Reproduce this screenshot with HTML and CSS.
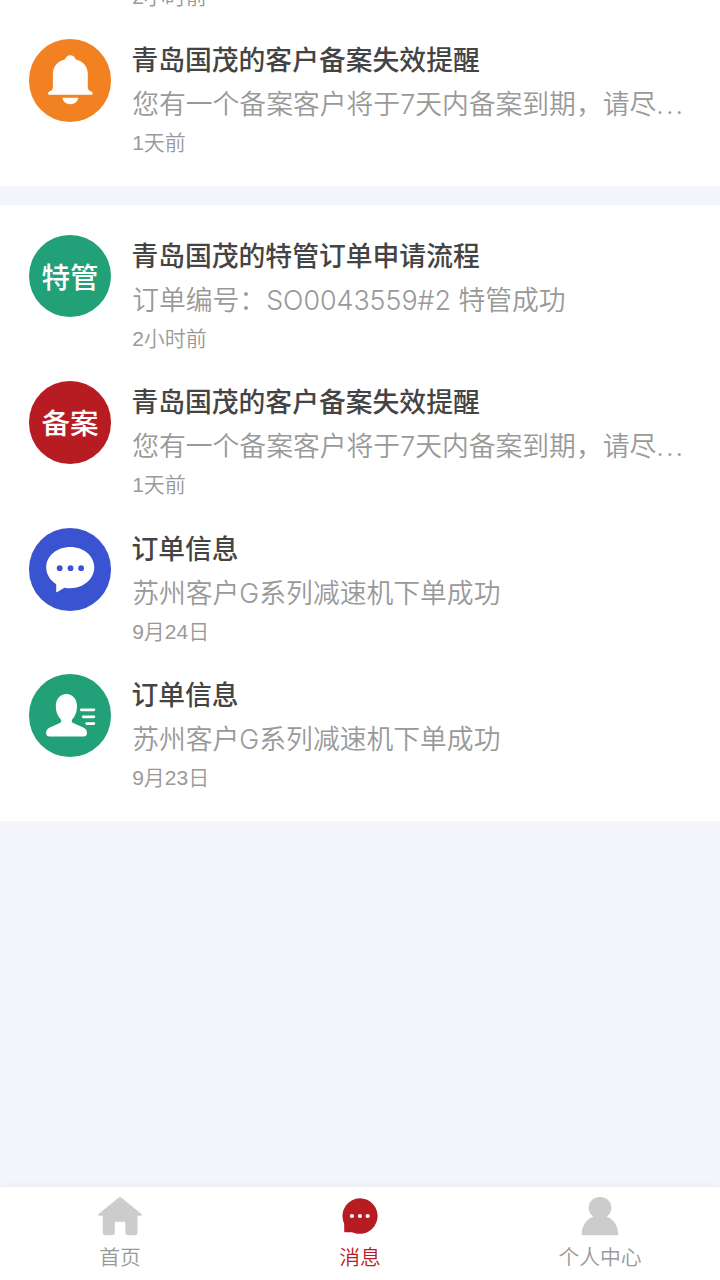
FILE: index.html
```html
<!DOCTYPE html>
<html lang="zh">
<head>
    <meta charset="UTF-8">
    <meta name="viewport" content="width=device-width, initial-scale=1.0">
    <title>消息</title>
    <link rel="stylesheet" href="styles.css">
</head>
<body>
    <div class="page">
        <div class="section section-top">
            <div class="item">
                <div class="content">
                    <p class="time">2小时前</p>
                </div>
            </div>
            <div class="item">
                <div class="avatar orange">
                    <svg viewBox="0 0 83 83">
                        <path d="M41.500 16.200c2.700 0 4.700 1.700 5.200 4.200 7.500 2 12.300 7.200 12.300 14.600v12.500c0 3 .8 4 3 4.900 2.600.8 2.600 3.600 0 3.600H21c-2.600 0-2.600-2.800 0-3.600 2.200-.9 3-1.900 3-4.900V35c0-7.400 4.800-12.600 12.300-14.600.5-2.500 2.500-4.200 5.200-4.200z"/>
                        <path d="M33.500 59h16c-.6 4-4 6.500-8 6.500s-7.400-2.500-8-6.500z"/>
                    </svg>
                </div>
                <div class="content">
                    <p class="title">青岛国茂的客户备案失效提醒</p>
                    <p class="desc">您有一个备案客户将于7天内备案到期，请尽<span class="more">...</span></p>
                    <p class="time">1天前</p>
                </div>
            </div>
        </div>

        <div class="section">
            <div class="item">
                <div class="avatar green">特管</div>
                <div class="content">
                    <p class="title">青岛国茂的特管订单申请流程</p>
                    <p class="desc">订单编号：SO0043559#2 特管成功</p>
                    <p class="time">2小时前</p>
                </div>
            </div>
            <div class="item">
                <div class="avatar red">备案</div>
                <div class="content">
                    <p class="title">青岛国茂的客户备案失效提醒</p>
                    <p class="desc">您有一个备案客户将于7天内备案到期，请尽<span class="more">...</span></p>
                    <p class="time">1天前</p>
                </div>
            </div>
            <div class="item">
                <div class="avatar blue">
                    <svg viewBox="0 0 83 83">
                        <path d="M41.500 19C55 19 65.500 28 65.500 39.500S55 60.500 41.500 60.500c-2 0-4-.2-6-.6l-7 4.400c-.7.4-1.200.1-1.200-.7v-7.100C21 52.500 17.300 46.500 17.300 39.500 17.300 28 28 19 41.500 19z"/>
                        <g class="dots-blue">
                            <circle cx="30.800" cy="40.300" r="2.900"/>
                            <circle cx="41.700" cy="40.300" r="2.900"/>
                            <circle cx="52.300" cy="40.300" r="2.900"/>
                        </g>
                    </svg>
                </div>
                <div class="content">
                    <p class="title">订单信息</p>
                    <p class="desc">苏州客户G系列减速机下单成功</p>
                    <p class="time">9月24日</p>
                </div>
            </div>
            <div class="item">
                <div class="avatar green">
                    <svg viewBox="0 0 83 83">
                        <path d="M37.500 20c6.300 0 10.700 5 10.700 12.500 0 5.500-2 10-5 13.300-.8 1.800 0 3 1.700 3.700L55 54c2.300 1.100 3.200 3 3.200 5.500 0 2-1.400 3.300-3.500 3.300h-34c-2.100 0-3.500-1.300-3.500-3.300 0-2.500.9-4.400 3.200-5.500l10-4.500c1.700-.7 2.500-1.900 1.700-3.700-3-3.300-5.200-7.800-5.200-13.300C26.900 25 31.200 20 37.500 20z"/>
                        <path class="lines" d="M52.500 36h12.600M54.500 43h10.600M58 49.800h7.100"/>
                    </svg>
                </div>
                <div class="content">
                    <p class="title">订单信息</p>
                    <p class="desc">苏州客户G系列减速机下单成功</p>
                    <p class="time">9月23日</p>
                </div>
            </div>
        </div>

        <div class="tabbar">
            <div class="tab">
                <svg viewBox="0 0 48 40">
                    <path d="M22.800 1.600c.7-.6 1.700-.6 2.400 0L45.400 18c.8.700.5 1.700-.6 1.700H41.500V36.500c0 1.800-1 2.800-2.800 2.800h-6.500c-1.800 0-2.900-1-2.900-2.800V26.800c0-.6-.4-1-1-1h-8.500c-.6 0-1 .4-1 1v9.700c0 1.800-1 2.800-2.800 2.800H9.600c-1.800 0-2.900-1-2.900-2.800V19.700H3.200c-1.100 0-1.400-1-.6-1.700z"/>
                </svg>
                <span>首页</span>
            </div>
            <div class="tab active">
                <svg viewBox="0.300 0 48 40">
                    <path d="M24 2.200a17.800 17.800 0 1 1-5.500 34.700c-.8-.5-1.600-.7-2.400-.7H9.800c-.8 0-1.300-.5-1.300-1.300v-6.500c0-.8-.3-1.600-.7-2.400A17.800 17.800 0 0 1 24 2.200z"/>
                    <g class="dots-white">
                        <circle cx="16.200" cy="20" r="2.100"/>
                        <circle cx="24.200" cy="20" r="2.100"/>
                        <circle cx="32" cy="20" r="2.100"/>
                    </g>
                </svg>
                <span>消息</span>
            </div>
            <div class="tab">
                <svg viewBox="0 0 48 40">
                    <path d="M24 .9a11 11 0 0 1 6.800 19.900C37.500 23.300 42 29.500 42.200 37.800c0 1-.5 1.500-1.500 1.500H7.200c-1 0-1.500-.5-1.500-1.500C6 29.500 10.500 23.300 17.200 20.800A11 11 0 0 1 24 .9z"/>
                </svg>
                <span>个人中心</span>
            </div>
        </div>
    </div>
</body>
</html>
```
FILE: styles.css
```css
* {
    box-sizing: border-box;
}
body {
    margin: 0;
    background: #f4f5fa;
    font-family: Inter, "Noto Sans CJK SC", sans-serif;
}
p {
    margin: 0;
}
.page {
    display: flex;
    flex-direction: column;
    height: 1280px;
    overflow: hidden;
}
.section {
    background: #fff;
    padding: 29.4px 28.7px 0;
    margin-bottom: 19.3px;
}
.section-top {
    display: flex;
    flex-direction: column;
    justify-content: flex-end;
    height: 186px;
    padding-top: 0;
    overflow: hidden;
    flex-shrink: 0;
}
.item {
    display: flex;
    height: 146.6px;
    flex-shrink: 0;
}
.section-top .item:first-child {
    align-items: flex-end;
    padding-left: 103.5px;
    padding-bottom: 28px;
}
.avatar {
    display: flex;
    align-items: center;
    justify-content: center;
    width: 82.7px;
    height: 82.7px;
    margin-right: 20.8px;
    flex-shrink: 0;
    border-radius: 50%;
    color: #fff;
    font-size: 28.5px;
    line-height: 80px;
    padding-bottom: 1px;
    font-weight: 500;
    font-family: "Noto Sans CJK SC", sans-serif;
}
.avatar svg {
    width: 82.7px;
    height: 82.7px;
    margin-bottom: -1px;
    flex-shrink: 0;
    fill: #fff;
}
.orange {
    background: #f28121;
}
.green {
    background: #22a077;
}
.red {
    background: #b81c23;
}
.blue {
    background: #3a53d1;
}
.dots-blue {
    fill: #3a53d1;
}
.dots-white {
    fill: #fff;
}
.lines {
    stroke: #fff;
    stroke-width: 2.9;
    stroke-linecap: round;
}
.content {
    flex: 1;
    min-width: 0;
}
.title {
    color: #444;
    font-family: "Noto Sans CJK SC", sans-serif;
    font-size: 26.8px;
    font-weight: 500;
    line-height: 40px;
    margin-left: -0.8px;
}
.desc {
    color: #999;
    font-size: 26.8px;
    font-weight: 350;
    line-height: 50px;
    white-space: nowrap;
}
.more {
    letter-spacing: 2px;
}
.time {
    color: #999;
    font-family: "Liberation Sans", "Noto Sans CJK SC", sans-serif;
    font-size: 21px;
    font-weight: 350;
    line-height: 28px;
}
.tabbar {
    display: flex;
    height: 93px;
    margin-top: auto;
    flex-shrink: 0;
    background: #fff;
    box-shadow: 0 -1px 8px rgba(0,0,0,0.04);
}
.tab {
    display: flex;
    flex-direction: column;
    align-items: center;
    flex: 1;
    padding-top: 9px;
    color: #999;
    font-size: 20.8px;
    font-weight: 350;
}
.tab svg {
    width: 48px;
    height: 40px;
    fill: #ccc;
}
.tab span {
    line-height: 43px;
}
.tab.active {
    color: #b81c23;
}
.tab.active svg {
    fill: #b81c23;
}
```
